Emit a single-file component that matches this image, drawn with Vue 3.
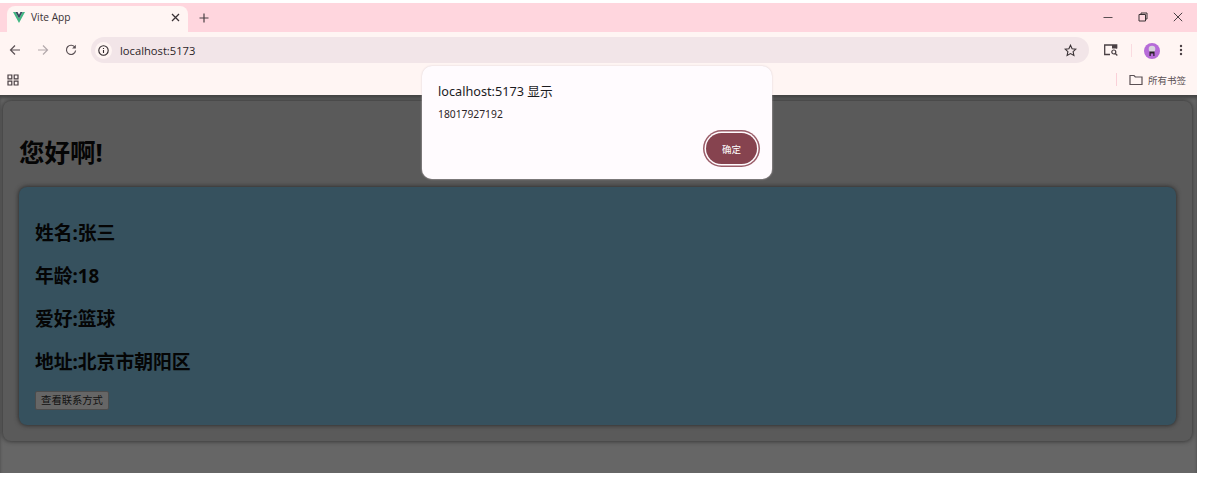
<script setup>
const person = [
  { label: '姓名', value: '张三' },
  { label: '年龄', value: '18' },
  { label: '爱好', value: '篮球' },
  { label: '地址', value: '北京市朝阳区' },
];
</script>

<template>
  <div class="window">
    <div class="tabstrip">
      <div class="tab">
        <svg class="favicon" width="12" height="11" viewBox="0 0 14 12" preserveAspectRatio="none">
          <path d="M0 0h2.8L7 7.2 11.200 0H14L7 12z" fill="#41b883" />
          <path d="M2.800 0h2.500L7 3 8.700 0h2.500L7 7.200z" fill="#35495e" />
        </svg>
        <span class="tab-title">Vite App</span>
        <svg class="tab-close" width="9" height="9" viewBox="0 0 9 9">
          <path d="M1 1l7 7M8 1L1 8" stroke="#3a3235" stroke-width="1.300" fill="none" />
        </svg>
      </div>
      <svg class="new-tab" width="10" height="10" viewBox="0 0 10 10">
        <path d="M5 .5v9M.5 5h9" stroke="#4a4044" stroke-width="1.200" fill="none" />
      </svg>
      <div class="window-controls">
        <svg width="10" height="10" viewBox="0 0 10 10">
          <path d="M.5 5.500h9" stroke="#5a4f53" stroke-width="1" fill="none" />
        </svg>
        <svg width="10" height="10" viewBox="0 0 10 10">
          <path d="M1 2.500h6.500V9H1zM3 2.500V1h6v6H7.500" stroke="#3a3235" stroke-width="1" fill="none" />
        </svg>
        <svg width="10" height="10" viewBox="0 0 10 10">
          <path d="M.8.800l8.400 8.400M9.200.800L.8 9.200" stroke="#4a4044" stroke-width="1" fill="none" />
        </svg>
      </div>
    </div>

    <div class="toolbar">
      <svg class="nav-icon" width="12" height="12" viewBox="0 0 12 12">
        <path d="M11 6H1.500M6 1.500L1.500 6 6 10.500" stroke="#5a5054" stroke-width="1.200" fill="none" />
      </svg>
      <svg class="nav-icon" width="12" height="12" viewBox="0 0 12 12">
        <path d="M1 6h9.500M6 1.500L10.500 6 6 10.500" stroke="#b3a9ac" stroke-width="1.200" fill="none" />
      </svg>
      <svg class="nav-icon" width="12" height="12" viewBox="0 0 12 12">
        <path d="M10 3.500A4.600 4.600 0 1 0 10.600 6.500" stroke="#5a5054" stroke-width="1.200" fill="none" />
        <path d="M10.800 .8v3.700H7.100z" fill="#5a5054" />
      </svg>
      <div class="omnibox">
        <span class="info-chip">
          <svg width="11" height="11" viewBox="0 0 11 11">
            <circle cx="5.500" cy="5.500" r="4.700" stroke="#2f282b" stroke-width="1.100" fill="none" />
            <path d="M5.500 5v3M5.500 3v1" stroke="#2f282b" stroke-width="1.100" fill="none" />
          </svg>
        </span>
        <span class="url">localhost:5173</span>
        <svg class="star" width="13" height="13" viewBox="0 0 13 13">
          <path d="M6.500 1.200l1.600 3.500 3.800.4-2.800 2.600.8 3.800-3.400-1.900-3.400 1.900.8-3.800L1.100 5.100l3.800-.4z" stroke="#3a3235" stroke-width="1.100" fill="none" />
        </svg>
      </div>
      <svg class="media-icon" width="14" height="12" viewBox="0 0 14 12">
        <path d="M6 10.500H.7V1h12v3.500" stroke="#4a4044" stroke-width="1.300" fill="none" />
        <path d="M8 1h5v3.500H8z" fill="#4a4044" />
        <circle cx="9.800" cy="8" r="2" stroke="#4a4044" stroke-width="1.200" fill="none" />
        <path d="M11.300 9.500l2 2" stroke="#4a4044" stroke-width="1.200" />
      </svg>
      <span class="toolbar-sep"></span>
      <span class="avatar">
        <svg width="16" height="16" viewBox="0 0 16 16">
          <circle cx="8" cy="8" r="8" fill="#b66bd8" />
          <circle cx="8" cy="6" r="3.300" fill="#d8d4dc" />
          <path d="M5.500 13V8.500h5V13H9.300v-2.500H6.700V13z" fill="#262025" />
        </svg>
      </span>
      <svg class="menu-dots" width="4" height="12" viewBox="0 0 4 12">
        <circle cx="2" cy="2" r="1.200" fill="#4a4044" />
        <circle cx="2" cy="6" r="1.200" fill="#4a4044" />
        <circle cx="2" cy="10" r="1.200" fill="#4a4044" />
      </svg>
    </div>

    <div class="bookmarks">
      <svg width="12" height="12" viewBox="0 0 12 12">
        <path d="M1 1h3.800v3.800H1zM7.200 1H11v3.800H7.200zM1 7.200h3.800V11H1zM7.200 7.200H11V11H7.200z" stroke="#4a4044" stroke-width="1.200" fill="none" />
      </svg>
      <span class="bookmarks-sep"></span>
      <svg class="folder" width="14" height="12" viewBox="0 0 14 12">
        <path d="M1 10.500V1.500h4l1.300 1.500h6.700v7.500z" stroke="#5a5054" stroke-width="1.200" fill="none" />
      </svg>
      <span class="all-bookmarks">所有书签</span>
    </div>

    <div class="page">
      <div class="outer-card">
        <h1>您好啊!</h1>
        <div class="inner-card">
          <h2 v-for="item in person" :key="item.label">{{ item.label }}:{{ item.value }}</h2>
          <button class="contact-btn">查看联系方式</button>
        </div>
      </div>
    </div>

    <div class="dialog">
      <div class="dialog-title">localhost:5173 显示</div>
      <div class="dialog-message">18017927192</div>
      <div class="dialog-actions">
        <button class="ok-btn">确定</button>
      </div>
    </div>
  </div>
</template>

<style scoped>
.window {
  position: relative;
  width: 1197px;
  height: 470px;
  margin-top: 3px;
  overflow: hidden;
  display: flex;
  flex-direction: column;
  font-family: "Noto Sans", "Noto Sans CJK SC", sans-serif;
}
.tabstrip {
  height: 29px;
  flex: none;
  background: #ffd6de;
  display: flex;
  align-items: flex-end;
  padding-left: 7px;
}
.tab {
  width: 181px;
  height: 26px;
  box-sizing: border-box;
  background: #fff5f3;
  border-radius: 8px 8px 0 0;
  display: flex;
  align-items: center;
  padding: 0 8px 4px 6px;
}
.favicon {
  flex: none;
}
.tab-title {
  margin-left: 6px;
  font-size: 10.200px;
  color: #3a3235;
  font-family: "Open Sans", sans-serif;
}
.tab-close {
  margin-left: auto;
}
.new-tab {
  margin: 0 0 9px 11px;
}
.window-controls {
  margin-left: auto;
  display: flex;
  gap: 25px;
  padding: 0 14px 10px 0;
}
.toolbar {
  height: 33px;
  box-sizing: border-box;
  flex: none;
  background: #fff5f3;
  display: flex;
  align-items: center;
  padding: 3px 0 0 9px;
}
.nav-icon {
  margin-right: 16px;
}
.omnibox {
  width: 998px;
  height: 26px;
  margin-left: -2px;
  border-radius: 13px;
  background: #f2e5e8;
  display: flex;
  align-items: center;
  padding: 0 12px 0 4px;
  box-sizing: border-box;
}
.info-chip {
  width: 17px;
  height: 17px;
  border-radius: 50%;
  background: #fff5f3;
  display: flex;
  align-items: center;
  justify-content: center;
}
.url {
  margin-left: 8px;
  font-size: 11.200px;
  color: #2b2427;
  font-family: "Open Sans", sans-serif;
}
.star {
  margin-left: auto;
}
.media-icon {
  margin-left: 15px;
}
.toolbar-sep {
  width: 1px;
  height: 13px;
  margin-left: 13px;
  background: #fadbe0;
}
.avatar {
  margin-left: 12px;
  height: 16px;
}
.menu-dots {
  margin-left: 19px;
}
.bookmarks {
  height: 30px;
  box-sizing: border-box;
  flex: none;
  background: #fff5f3;
  display: flex;
  align-items: center;
  padding: 0 0 1px 7px;
}
.bookmarks-sep {
  width: 1px;
  height: 13px;
  margin-left: 1097px;
  background: #fad0d8;
}
.folder {
  margin-left: 12px;
}
.all-bookmarks {
  margin-left: 5px;
  font-size: 9.500px;
  color: #5a5054;
}
.page {
  flex: 1;
  background: #666666;
  padding: 6px 5px 0 3px;
  box-shadow: inset 0 3px 3px #454545;
}
.outer-card {
  height: 340px;
  box-sizing: border-box;
  background: #5a5a5a;
  border-radius: 8px;
  box-shadow: 0 0 5px #282828;
  padding: 32px 16px 0;
}
h1 {
  margin: 0;
  height: 54px;
  font-size: 25.500px;
  line-height: 39px;
  font-weight: 700;
  color: #050505;
}
.inner-card {
  height: 238px;
  box-sizing: border-box;
  background: #36515e;
  border-radius: 8px;
  box-shadow: 0 0 5px #202020;
  padding: 29px 16px 0;
}
h2 {
  margin: 0 0 14px;
  height: 29px;
  font-size: 18.800px;
  line-height: 35px;
  font-weight: 700;
  color: #050505;
}
.contact-btn {
  display: block;
  width: 74px;
  height: 19px;
  padding: 0;
  margin-top: 17px;
  font-family: inherit;
  font-size: 10.300px;
  line-height: 17px;
  color: #111111;
  background: #666666;
  border: 1px solid #4c4c4c;
  border-radius: 2px;
}
.dialog {
  position: absolute;
  left: 422px;
  top: 63px;
  width: 350px;
  height: 113px;
  box-sizing: border-box;
  background: #fffbfe;
  border-radius: 10px;
  box-shadow: 0 0 2px #d8ccd0;
  padding: 15px 14px 0 16px;
}
.dialog-title {
  font-size: 12.700px;
  line-height: 20px;
  color: #1c1b1f;
}
.dialog-message {
  margin-top: 5px;
  font-size: 10.300px;
  line-height: 16px;
  color: #2b2427;
}
.dialog-actions {
  display: flex;
  justify-content: flex-end;
  margin-top: 11px;
}
.ok-btn {
  width: 51px;
  height: 31px;
  padding: 0;
  font-family: inherit;
  font-size: 9.500px;
  color: #ffffff;
  background: #86434f;
  border: none;
  border-radius: 16px;
  box-shadow: 0 0 0 1.500px #fffbfe, 0 0 0 3px #9a5c68;
  margin: 0 1px 0 0;
}
</style>

<style>
html,
body {
  background: #ffffff;
}
</style>
